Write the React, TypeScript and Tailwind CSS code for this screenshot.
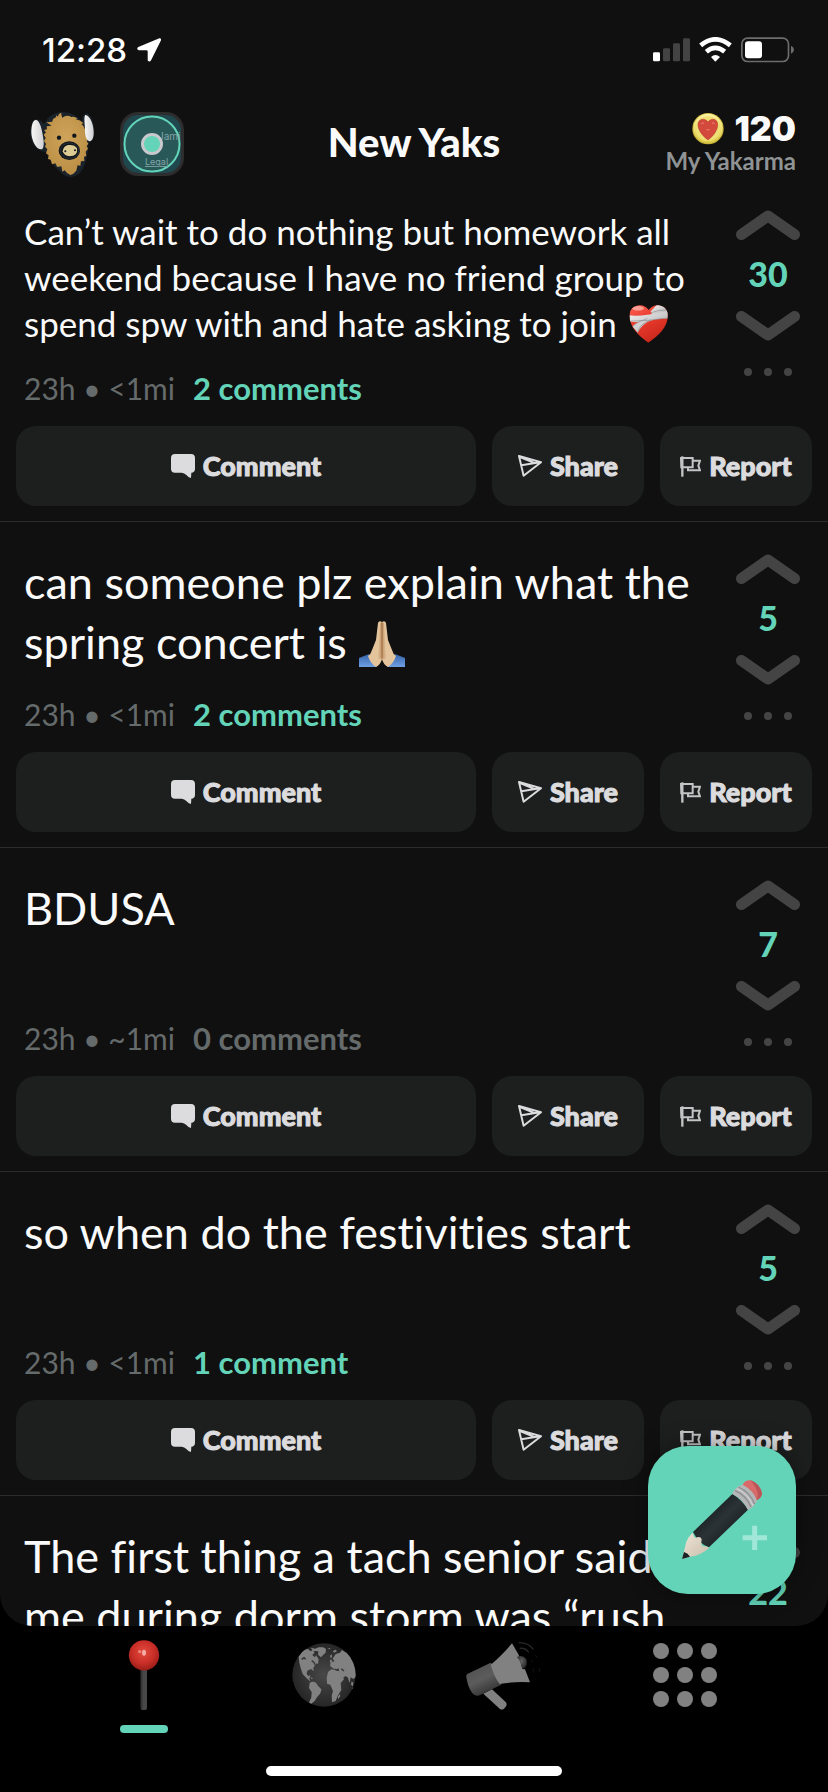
import type { ReactNode } from "react";

type Post = {
  id: number;
  size: "sm" | "lg";
  body: ReactNode;
  age: string;
  distance: string;
  comments: string;
  active: boolean;
  votes: number;
};

function LocationArrow() {
  return (
    <svg className="h-6 w-6" viewBox="407 113 74 74" aria-hidden="true">
      <path d="M476 114 Q482 113 481 120 L450 182 Q445 189 440 182 V155 Q440 151 436 151 L412 151 Q404 147 411 141 Z" fill="#fff" />
    </svg>
  );
}

function StatusIcons() {
  return (
    <svg className="h-[26px] w-[142px]" viewBox="717 110 426 78" aria-hidden="true">
      <rect x="717" y="156" width="21" height="27" rx="4" fill="#fff" />
      <rect x="747" y="144" width="21" height="39" rx="4" fill="#434343" />
      <rect x="777" y="129" width="21" height="54" rx="4" fill="#434343" />
      <rect x="807" y="114" width="21" height="69" rx="4" fill="#434343" />
      <path d="M860 135 Q904 99 949 135" fill="none" stroke="#fff" strokeWidth="14" />
      <path d="M877 154 Q904 131 932 154" fill="none" stroke="#fff" strokeWidth="14" />
      <path d="M891 170 Q904 158 918 170 L904 184 Z" fill="#fff" />
      <rect x="983.500" y="113.500" width="140" height="70" rx="17" fill="none" stroke="#6c6c6c" strokeWidth="5" />
      <rect x="993" y="123" width="51" height="51" rx="9" fill="#fff" />
      <path d="M1131 136 Q1140 140 1140 148 Q1140 156 1131 160 Z" fill="#6c6c6c" />
    </svg>
  );
}

function YakAvatar() {
  return (
    <svg className="h-[68px] w-[68px]" viewBox="24 33 204 204" aria-hidden="true">
      <defs>
        <radialGradient id="yakFur" cx="50%" cy="40%" r="65%">
          <stop offset="0" stopColor="#cfa45a" />
          <stop offset="1" stopColor="#b98d42" />
        </radialGradient>
        <linearGradient id="yakHorn" x1="0" x2="1">
          <stop offset="0" stopColor="#f7f7f7" />
          <stop offset="1" stopColor="#cfcfd2" />
        </linearGradient>
      </defs>
      <path d="M47 60 Q62 62 72 75 Q90 42 122 39 Q165 38 186 68 Q186 42 203 43 Q222 60 223 98 Q221 128 206 132 Q202 200 176 226 Q151 243 128 226 Q92 195 78 160 Q36 152 31 105 Q31 66 47 60 Z" fill="#1a222a" />
      <path d="M80 82 L95 80 L79 70 L97 68 Q98 58 108 55 L109 49 L114 53 Q116 42 124 42 Q123 50 127 56 Q140 46 154 54 Q164 51 173 60 L166 61 Q181 63 191 73 L184 75 Q194 82 195 91 Q196 112 204 122 L200 127 L205 134 L200 141 L204 149 L197 158 L199 170 L192 174 L193 186 L183 187 L181 201 L173 198 L169 215 Q160 226 151 228 Q139 223 134 214 L127 218 L124 202 L112 204 L106 193 L96 196 L92 182 L84 180 L86 169 L78 163 L82 151 L75 143 L78 135 L72 126 L77 117 L71 107 L78 100 L72 93 L81 91 Z" fill="url(#yakFur)" />
      <path d="M47 63 C58 62 66 86 71 125 C72 140 70 150 64 151 C48 151 35 124 34 101 C34 78 39 63 47 63 Z" fill="url(#yakHorn)" />
      <path d="M197 48 C212 51 222 81 221 103 C221 119 215 127 209 127 C199 125 194 111 195 88 C194 73 191 48 197 48 Z" fill="url(#yakHorn)" />
      <circle cx="117" cy="116" r="6.500" fill="#11171c" />
      <circle cx="163" cy="110" r="6.500" fill="#11171c" />
      <ellipse cx="148" cy="155" rx="32" ry="28" fill="#11171c" />
      <ellipse cx="149" cy="155" rx="28" ry="23" fill="none" stroke="#343b40" strokeWidth="2" />
      <path d="M128 157 Q130 141 145 138 Q164 136 171 148 Q174 166 160 170 Q133 176 128 157 Z" fill="#dccb93" />
      <circle cx="136" cy="157" r="3" fill="#11171c" />
      <circle cx="165" cy="154" r="3" fill="#11171c" />
    </svg>
  );
}

function MapPreview() {
  return (
    <svg className="h-16 w-16" viewBox="0 0 64 64" aria-hidden="true">
      <rect width="64" height="64" rx="18" fill="#2d2d2e" />
      <rect x="3" y="3" width="58" height="58" rx="15" fill="#20464e" />
      <path d="M21 4 L29 25 M42 12 l4 5" stroke="#3b5359" strokeWidth="1" />
      <circle cx="32" cy="32" r="27.500" fill="#295859" stroke="#63d4b8" strokeWidth="2" />
      <text x="38" y="28" fontSize="10" fill="#83a5a7" fontFamily="Inter, sans-serif">Jami</text>
      <text x="25" y="53" fontSize="9" fill="#83a5a7" fontFamily="Inter, sans-serif" textDecoration="underline">Legal</text>
      <circle cx="32" cy="32" r="9.500" fill="#63d4b8" stroke="#c9c9cd" strokeWidth="3" />
    </svg>
  );
}

function KarmaCoin() {
  return (
    <svg className="h-8 w-8" viewBox="0 0 96 96" aria-hidden="true">
      <defs>
        <linearGradient id="coin" x1="0" y1="0" x2="0" y2="1">
          <stop offset="0" stopColor="#fbf1a0" />
          <stop offset="1" stopColor="#dccb43" />
        </linearGradient>
      </defs>
      <circle cx="48" cy="47" r="47" fill="#c9b23a" />
      <circle cx="48" cy="46" r="44" fill="url(#coin)" />
      <circle cx="48" cy="47" r="37" fill="#efe075" />
      <path d="M48 81 C28 66 18 49 18 35 C18 16 40 14 48 27 C56 14 77 16 77 35 C77 50 67 67 48 81 Z" fill="#d34a3c" stroke="#b4372d" strokeWidth="1.500" />
      <path d="M28 32 q3 -4 7 -2 M61 30 q5 -2 7 2 M44 50 q4 3 8 0" fill="none" stroke="#ee9284" strokeWidth="2.500" strokeLinecap="round" />
    </svg>
  );
}

function MendingHeart() {
  return (
    <svg className="ml-3 inline-block h-[38px] w-[39px] align-[-6px]" viewBox="645 347 117 115" role="img" aria-label="mending heart">
      <defs>
        <linearGradient id="heartRed" x1="0" y1="0" x2="0.6" y2="1">
          <stop offset="0" stopColor="#ff6a5e" />
          <stop offset="0.5" stopColor="#e83a2b" />
          <stop offset="1" stopColor="#c7261b" />
        </linearGradient>
        <linearGradient id="gauze" x1="0" y1="0" x2="1" y2="1">
          <stop offset="0" stopColor="#f4f4f4" />
          <stop offset="1" stopColor="#a9a9ac" />
        </linearGradient>
        <clipPath id="heartClip">
          <path d="M703 461 C674 441 646 414 646 379 C646 344 690 338 704 362 C719 338 762 344 762 379 C762 414 733 441 703 461 Z" />
        </clipPath>
      </defs>
      <g clipPath="url(#heartClip)">
        <rect x="640" y="340" width="130" height="125" fill="url(#heartRed)" />
        <ellipse cx="672" cy="357" rx="17" ry="7" fill="#ffb0a6" opacity="0.8" />
        <path d="M710 367 L730 345 L752 350 L765 375 L716 378 Z" fill="url(#gauze)" />
        <path d="M643 378 Q680 384 763 364 V388 Q722 388 703 397 Q680 410 671 431 L655 412 Q664 400 678 400 L643 397 Z" fill="url(#gauze)" />
        <path d="M645 396 Q700 396 762 386 M671 430 Q677 403 710 393 M712 370 Q735 361 757 362 M656 412 Q672 395 700 388" fill="none" stroke="#8e8e92" strokeWidth="2" />
      </g>
    </svg>
  );
}

function PrayingHands() {
  return (
    <svg className="ml-3 inline-block h-[46px] w-[46px] align-[-8px]" viewBox="0 0 46 46" role="img" aria-label="folded hands">
      <defs>
        <linearGradient id="skin" x1="0" x2="1">
          <stop offset="0" stopColor="#ecd2ab" />
          <stop offset="0.5" stopColor="#c39468" />
          <stop offset="1" stopColor="#ecd2ab" />
        </linearGradient>
        <linearGradient id="sleeve" x1="0" y1="0" x2="0" y2="1">
          <stop offset="0" stopColor="#3563a8" />
          <stop offset="1" stopColor="#6fa0e6" />
        </linearGradient>
      </defs>
      <path d="M0 46 V37 Q5 35 10 33 L19 44 L17 46 Z" fill="url(#sleeve)" />
      <path d="M46 46 V37 Q41 35 36 33 L27 44 L29 46 Z" fill="url(#sleeve)" />
      <path d="M23 1 Q20 -1 19 2 L17 19 L13 29 Q12 33 9 35 Q11 42 17 46 Q22 43 23 38 Z" fill="#e3c49b" />
      <path d="M23 1 Q26 -1 27 2 L29 19 L33 29 Q34 33 37 35 Q35 42 29 46 Q24 43 23 38 Z" fill="#e3c49b" />
      <path d="M21 2 L20 24 Q20 33 17 38 Q22 39 23 36 Q24 39 29 38 Q26 33 26 24 L25 2 Z" fill="url(#skin)" />
      <path d="M23 1 V38" stroke="#9b6b42" strokeWidth="1" />
    </svg>
  );
}

function CommentIcon() {
  return (
    <svg className="h-6 w-6" viewBox="0 0 72 72" aria-hidden="true">
      <path d="M12 0 H60 Q72 0 72 12 V44 Q72 55 61 56 L60 72 Q52 70 46 63 Q40 57 32 56 H12 Q0 56 0 44 V12 Q0 0 12 0 Z" fill="#dcdcde" />
    </svg>
  );
}

function ShareIcon() {
  return (
    <svg className="h-[22px] w-6" viewBox="303 795 73 67" aria-hidden="true">
      <path d="M306 798 L373 817 L320 858 Z M313 826 L370 817 M309 801 L354 820" fill="none" stroke="#dcdcde" strokeWidth="6" strokeLinejoin="round" />
    </svg>
  );
}

function ReportIcon() {
  return (
    <svg className="h-[21px] w-[21px]" viewBox="791 796 63 63" aria-hidden="true">
      <path d="M798 797 V858" stroke="#c4c4c6" strokeWidth="7" />
      <path d="M794 802 H829 V830 H795 Z M829 810 H851 L846 825 L851 839 H815 V831" fill="none" stroke="#c4c4c6" strokeWidth="6" />
    </svg>
  );
}

function Chevron({ down = false }: { down?: boolean }) {
  return (
    <svg className="h-[30px] w-16" viewBox="0 0 64 30" aria-hidden="true">
      <path d={down ? "M5.500 5.500 L32 24 L58.500 5.500" : "M5.500 24.500 L32 6 L58.500 24.500"} fill="none" stroke="#444" strokeWidth="11" strokeLinecap="round" strokeLinejoin="round" />
    </svg>
  );
}

const posts: Post[] = [
  {
    id: 1,
    size: "sm",
    body: (
      <>
        Can’t wait to do nothing but homework all
        <br />
        weekend because I have no friend group to
        <br />
        spend spw with and hate asking to join
        <MendingHeart />
      </>
    ),
    age: "23h",
    distance: "<1mi",
    comments: "2 comments",
    active: true,
    votes: 30,
  },
  {
    id: 2,
    size: "lg",
    body: (
      <>
        can someone plz explain what the
        <br />
        spring concert is
        <PrayingHands />
      </>
    ),
    age: "23h",
    distance: "<1mi",
    comments: "2 comments",
    active: true,
    votes: 5,
  },
  { id: 3, size: "lg", body: "BDUSA", age: "23h", distance: "~1mi", comments: "0 comments", active: false, votes: 7 },
  { id: 4, size: "lg", body: "so when do the festivities start", age: "23h", distance: "<1mi", comments: "1 comment", active: true, votes: 5 },
];

const bodySizes = {
  sm: "-mt-0.5 text-[35px] leading-[46px] whitespace-nowrap",
  lg: "-mt-0.5 text-[45px] leading-[60px] whitespace-nowrap",
};

const actionClass =
  "flex h-20 items-center justify-center gap-2 rounded-[20px] bg-[#1d1e1e] text-[27px] font-black text-[#dcdcde] [-webkit-text-stroke:1px_#dcdcde]";

function VoteColumn({ votes }: { votes: number }) {
  return (
    <div className="flex w-16 shrink-0 flex-col items-center">
      <button type="button" aria-label="Upvote"><Chevron /></button>
      <span className="mt-3.5 mb-[18px] text-[34px] leading-[39px] font-black text-[#63d4b8]">{votes}</span>
      <button type="button" aria-label="Downvote"><Chevron down /></button>
      <button type="button" aria-label="More options" className="mt-[27px] flex gap-3">
        <span className="size-2 rounded-full bg-[#444]" />
        <span className="size-2 rounded-full bg-[#444]" />
        <span className="size-2 rounded-full bg-[#444]" />
      </button>
    </div>
  );
}

function PostCard({ post }: { post: Post }) {
  return (
    <article className="shrink-0 border-b border-[#2b2c2c] pt-8 pb-[15px]">
      <div className="flex justify-between pr-7 pl-6">
        <div className="flex min-h-[196px] flex-col justify-between">
          <p className={bodySizes[post.size]}>{post.body}</p>
          <div className="mt-[26px] mb-[22px] flex h-8 items-center text-[30px] leading-8 text-[#656a6b]">
            <span>{post.age} • {post.distance}</span>
            <span className={post.active ? "ml-[18px] text-[31px] font-bold text-[#63d4b8]" : "ml-[18px] text-[31px] font-bold"}>{post.comments}</span>
          </div>
        </div>
        <VoteColumn votes={post.votes} />
      </div>
      <div className="flex gap-4 px-4">
        <button type="button" className={`${actionClass} flex-1`}><CommentIcon />Comment</button>
        <button type="button" className={`${actionClass} w-[152px]`}><ShareIcon />Share</button>
        <button type="button" className={`${actionClass} w-[152px]`}><ReportIcon />Report</button>
      </div>
    </article>
  );
}

function PencilIcon() {
  return (
    <svg className="h-full w-full" viewBox="144 138 444 444" aria-hidden="true">
      <defs>
        <linearGradient id="barrel" x1="0" y1="0" x2="1" y2="1">
          <stop offset="0.2" stopColor="#12191c" />
          <stop offset="0.5" stopColor="#2c3336" />
          <stop offset="0.8" stopColor="#151b1e" />
        </linearGradient>
        <linearGradient id="wood" x1="0" y1="0" x2="1" y2="1">
          <stop offset="0" stopColor="#eee6da" />
          <stop offset="1" stopColor="#c9bca9" />
        </linearGradient>
      </defs>
      <path d="M279 396 L397 282 Q425 298 444 329 L327 442 Q298 433 279 396 Z" fill="url(#barrel)" />
      <path d="M246 477 L256 437 Q261 411 279 398 Q281 413 287 413 Q302 408 305 418 Q302 436 308 439 Q320 437 328 443 Q304 466 270 470 Z" fill="url(#wood)" />
      <path d="M246 477 L252 456 Q264 459 270 470 Z" fill="#1b2023" />
      <path d="M397 282 Q402 263 429 253 Q460 270 471 302 Q462 323 444 330 Q428 296 397 282 Z" fill="#b5b6b7" />
      <path d="M405 272 Q438 286 453 321 M415 261 Q450 276 464 312" fill="none" stroke="#8b8d8f" strokeWidth="4" />
      <path d="M410 266 Q444 281 459 317" fill="none" stroke="#d8d8d9" strokeWidth="3" />
      <path d="M428 254 Q436 239 452 241 Q479 250 486 280 Q486 293 470 301 Q461 271 428 254 Z" fill="#d86a6a" />
      <path d="M452 241 Q479 250 486 280 Q486 293 470 301 Q482 278 452 241 Z" fill="#bd5558" />
      <path d="M464 377 V450 M428 413 H501" stroke="#a0e7d8" strokeWidth="15" />
    </svg>
  );
}

function PinIcon() {
  return (
    <svg className="size-[72px]" viewBox="54 117 216 216" aria-hidden="true">
      <defs>
        <radialGradient id="ball" cx="48%" cy="40%" r="60%">
          <stop offset="0" stopColor="#e24a3e" />
          <stop offset="0.6" stopColor="#c92f27" />
          <stop offset="1" stopColor="#9b1d18" />
        </radialGradient>
      </defs>
      <rect x="152" y="200" width="19" height="130" rx="6" fill="#484848" />
      <path d="M155 210 V326" stroke="#333" strokeWidth="5" />
      <circle cx="162" cy="166" r="45.500" fill="url(#ball)" />
      <ellipse cx="162" cy="158" rx="6" ry="9" fill="#f3ada6" />
      <ellipse cx="149" cy="155" rx="5" ry="4" fill="#ee8b83" />
    </svg>
  );
}

function GlobeIcon() {
  return (
    <svg className="size-[72px]" viewBox="594 117 216 216" aria-hidden="true">
      <defs>
        <radialGradient id="ocean">
          <stop offset="0" stopColor="#484848" />
          <stop offset="1" stopColor="#262626" />
        </radialGradient>
        <clipPath id="globeClip"><circle cx="702" cy="225" r="95" /></clipPath>
      </defs>
      <circle cx="702" cy="225" r="95" fill="url(#ocean)" />
      <g clipPath="url(#globeClip)" fill="#818181">
        <path d="M626 170 L640 150 L654 147 L662 154 L668 149 L674 158 L667 165 L675 172 L678 165 L686 178 L684 192 L678 190 L670 204 L671 214 L663 207 L652 212 L650 222 L655 228 L662 226 L658 236 L662 245 L650 235 L638 222 L632 204 L628 188 Z" />
        <path d="M662 143 L676 146 L686 142 L699 142 L708 147 L707 158 L700 164 L693 172 L684 164 L685 154 L670 153 Z" />
        <path d="M659 249 Q668 242 678 248 Q683 258 694 268 Q693 282 682 290 L674 303 L663 312 L657 308 L664 292 L665 276 L657 264 Z" />
        <path d="M714 216 L724 208 L746 212 L754 224 L762 238 L752 249 L754 270 L744 286 L737 303 L726 307 L725 287 L729 273 L721 254 L711 251 L710 233 Z" />
        <path d="M720 198 L722 186 L734 184 L728 176 L737 162 L750 158 L756 150 L766 157 L777 158 L788 172 L798 200 L798 230 L790 237 L782 232 L779 249 L773 232 L766 228 L757 236 L748 218 L746 205 L736 210 L728 204 Z" />
        <path d="M720 167 l5 -4 l1 8 l-4 4 Z M719 182 l5 -4 l2 6 l-5 4 Z M712 147 l7 -3 l3 4 Z M728 154 l8 -5 l5 4 l-8 5 Z M775 286 Q789 276 786 265 L793 259 Q791 278 780 289 Z M785 244 l5 5 l-2 10 l-5 -5 Z M743 291 l6 -9 l2 6 l-6 9 Z M662 232 l8 3 l-6 2 Z" />
      </g>
      <path d="M635 178 l7 -5 l5 5 M665 182 l7 5 l2 7 M734 207 l7 4 l5 -3 M754 206 l8 7" fill="none" stroke="#343434" strokeWidth="4" />
    </svg>
  );
}

function MegaphoneIcon() {
  return (
    <svg className="size-[72px] overflow-visible" viewBox="144 117 216 216" aria-hidden="true">
      <defs>
        <linearGradient id="cone" x1="0.2" y1="0" x2="0.7" y2="1">
          <stop offset="0" stopColor="#4e4e4e" />
          <stop offset="0.5" stopColor="#5c5c5c" />
          <stop offset="1" stopColor="#2c2c2c" />
        </linearGradient>
        <radialGradient id="horn" cx="45%" cy="40%">
          <stop offset="0" stopColor="#626262" />
          <stop offset="1" stopColor="#303030" />
        </radialGradient>
      </defs>
      <path d="M296 128 Q324 127 340 148 M299 145 Q317 143 326 157" fill="none" stroke="#292929" strokeWidth="4" />
      <path d="M347 165 l4 8 M334 180 l3 6 M360 204 l-3 12 M341 206 l-2 9" stroke="#161616" strokeWidth="3" />
      <path d="M190 281 L216 268 L257 306 Q265 315 252 326 Q245 331 239 326 Z" fill="#818181" />
      <path d="M139 232 Q137 222 148 219 L212 188 Q238 210 244 254 L179 286 Q165 291 155 277 Q144 262 139 232 Z" fill="url(#cone)" />
      <path d="M212 194 Q243 169 276 130 L296 164 L307 207 L315 208 L330 247 Q286 244 239 252 Q222 230 212 194 Z" fill="#818181" />
      <path d="M291 171 Q306 162 319 177 Q326 198 307 208 Q305 189 291 171 Z" fill="url(#horn)" />
    </svg>
  );
}

function GridIcon() {
  return (
    <svg className="size-[72px]" viewBox="0 0 72 72" fill="#818181" aria-hidden="true">
      {[12, 36, 60].map((y) => [12, 36, 60].map((x) => <circle key={`${x}-${y}`} cx={x + 1} cy={y} r="8" />))}
    </svg>
  );
}

const tabs = [
  { label: "Nearby", icon: <PinIcon />, active: true },
  { label: "World", icon: <GlobeIcon />, active: false },
  { label: "Announcements", icon: <MegaphoneIcon />, active: false },
  { label: "More", icon: <GridIcon />, active: false },
];

export default function App() {
  return (
    <div className="flex h-screen flex-col overflow-hidden bg-black font-[Lato,'Noto_Sans',sans-serif] text-[#fafafa] [font-variant-ligatures:none]">
      <header className="relative z-10 h-[196px] shrink-0 bg-[#101010]">
        <div className="flex h-[100px] items-center justify-between pr-[33px] pl-[42px]">
          <div className="flex items-center gap-2.5 font-[Inter,sans-serif] text-[33px] leading-10 font-medium text-white">
            <span>12:28</span>
            <LocationArrow />
          </div>
          <StatusIcons />
        </div>
        <div className="grid grid-cols-[1fr_auto_1fr] items-center px-8">
          <div className="-ml-1 flex items-center gap-6">
            <button type="button" aria-label="Profile"><YakAvatar /></button>
            <button type="button" aria-label="Map"><MapPreview /></button>
          </div>
          <h1 className="pb-1 text-[40px] leading-[84px] font-black">New Yaks</h1>
          <div className="flex flex-col items-end">
            <div className="flex items-center gap-2.5 font-[Inter,sans-serif] text-[34px] leading-8 font-black"><KarmaCoin />120</div>
            <div className="pt-0.5 text-[24px] leading-7 font-bold text-[#8f9394]">My Yakarma</div>
          </div>
        </div>
      </header>

      <main className="relative flex min-h-0 flex-1 flex-col overflow-hidden rounded-b-[32px] bg-[#101010]">
        <div className="-mt-[18px] flex flex-col">
          {posts.map((post) => <PostCard key={post.id} post={post} />)}
          <article className="flex shrink-0 justify-between pt-8 pr-7 pl-6">
            <p className={bodySizes.lg}>The first thing a tach senior said<br />me during dorm storm was “rush</p>
            <VoteColumn votes={22} />
          </article>
        </div>
        <button type="button" aria-label="New yak" className="absolute right-8 bottom-8 size-[148px] rounded-[40px] bg-[#63d4b8] shadow-[0_0_24px_rgba(0,0,0,0.4)]">
          <PencilIcon />
        </button>
      </main>

      <footer className="flex shrink-0 flex-col items-center pt-[13px] pb-4">
        <nav className="grid w-full grid-cols-4 px-[54px]">
          {tabs.map((tab) => (
            <button key={tab.label} type="button" aria-label={tab.label} className="flex flex-col items-center gap-3.5">
              {tab.icon}
              <span className={tab.active ? "h-2 w-12 rounded-full bg-[#63d4b8]" : "h-2 w-12"} />
            </button>
          ))}
        </nav>
        <div className="mt-[33px] h-2.5 w-[296px] rounded-full bg-white" />
      </footer>
    </div>
  );
}
